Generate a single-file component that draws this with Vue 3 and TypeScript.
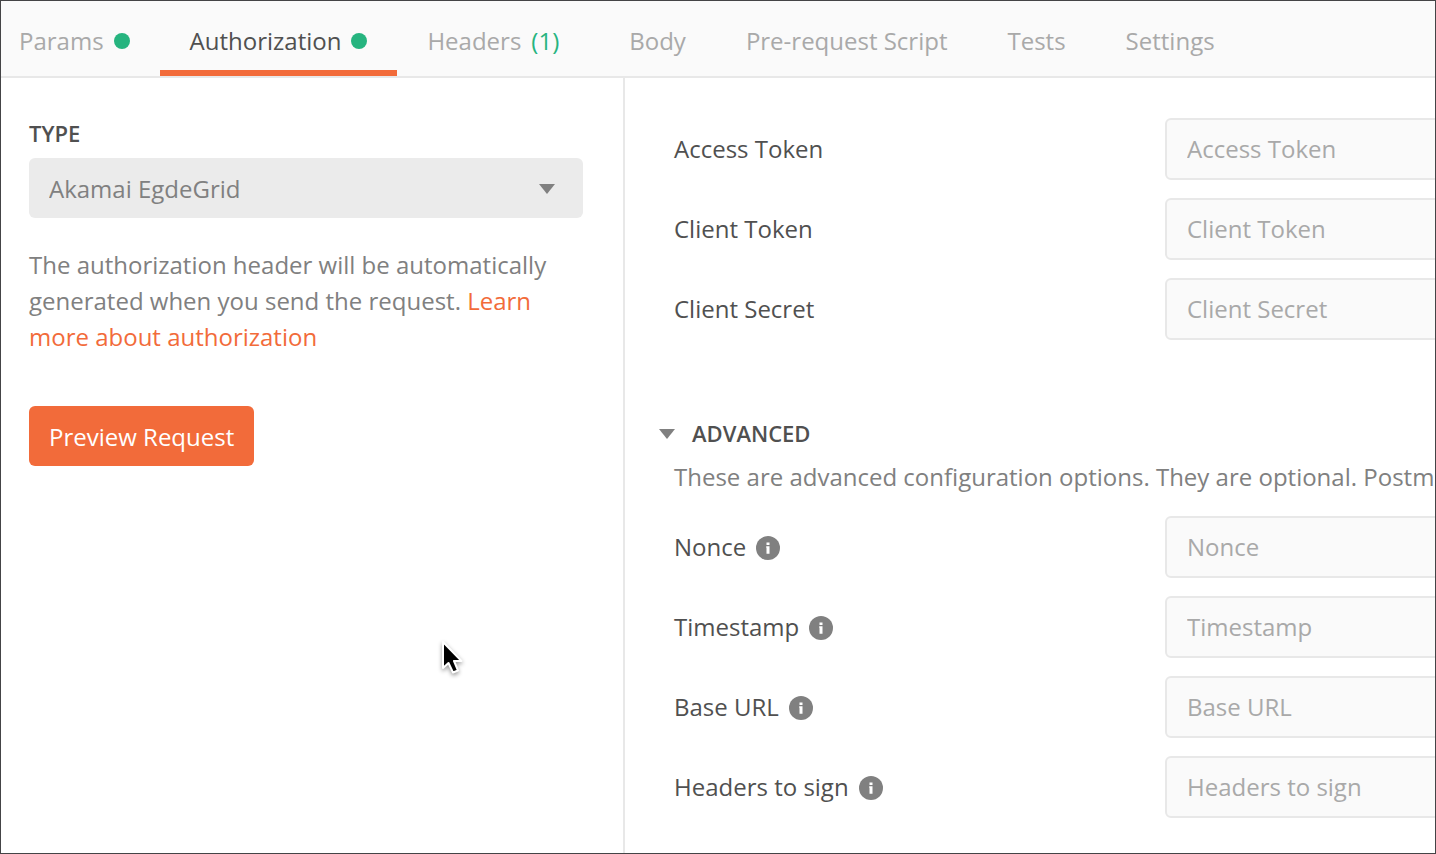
<script setup lang="ts">
import { ref } from 'vue'

interface Tab {
  name: string
  dot?: boolean
  count?: number
}

interface Field {
  id: string
  label: string
  info?: boolean
}

const tabs: Tab[] = [
  { name: 'Params', dot: true },
  { name: 'Authorization', dot: true },
  { name: 'Headers', count: 1 },
  { name: 'Body' },
  { name: 'Pre-request Script' },
  { name: 'Tests' },
  { name: 'Settings' },
]
const activeTab = ref('Authorization')

const tokenFields: Field[] = [
  { id: 'access-token', label: 'Access Token' },
  { id: 'client-token', label: 'Client Token' },
  { id: 'client-secret', label: 'Client Secret' },
]

const advancedFields: Field[] = [
  { id: 'nonce', label: 'Nonce', info: true },
  { id: 'timestamp', label: 'Timestamp', info: true },
  { id: 'base-url', label: 'Base URL', info: true },
  { id: 'headers-to-sign', label: 'Headers to sign', info: true },
]

const authType = ref('Akamai EgdeGrid')
const advancedOpen = ref(true)
const values = ref<Record<string, string>>({})
</script>

<template>
  <div class="window">
    <nav class="tabs">
      <button
        v-for="tab in tabs"
        :key="tab.name"
        type="button"
        class="tab"
        :class="{ active: tab.name === activeTab }"
        @click="activeTab = tab.name"
      >
        <span>{{ tab.name }}</span>
        <span v-if="tab.dot" class="dot"></span>
        <span v-if="tab.count" class="count">({{ tab.count }})</span>
      </button>
    </nav>

    <main class="panes">
      <section class="type-pane">
        <label class="heading" for="auth-type">TYPE</label>
        <div class="select-wrap">
          <select id="auth-type" v-model="authType" class="select">
            <option>Akamai EgdeGrid</option>
          </select>
          <svg class="select-arrow" width="16" height="10" viewBox="0 0 16 10">
            <path d="M0 0H16L8 10Z" fill="#808080" />
          </svg>
        </div>
        <p class="hint">
          The authorization header will be automatically generated when you send the request.
          <a href="#">Learn more about authorization</a>
        </p>
        <button type="button" class="preview">Preview Request</button>
      </section>

      <form class="fields-pane" @submit.prevent>
        <div class="fields">
          <div v-for="field in tokenFields" :key="field.id" class="row">
            <label :for="field.id">{{ field.label }}</label>
            <input :id="field.id" v-model="values[field.id]" type="text" :placeholder="field.label" />
          </div>
        </div>

        <button
          type="button"
          class="advanced-toggle"
          :aria-expanded="advancedOpen"
          @click="advancedOpen = !advancedOpen"
        >
          <svg class="toggle-arrow" width="16" height="10" viewBox="0 0 16 10">
            <path d="M0 0H16L8 10Z" fill="#808080" />
          </svg>
          <span class="heading">ADVANCED</span>
        </button>

        <template v-if="advancedOpen">
          <p class="advanced-text">
            These are advanced configuration options. They are optional. Postm
          </p>
          <div class="fields">
            <div v-for="field in advancedFields" :key="field.id" class="row">
              <label :for="field.id">
                {{ field.label }}
                <svg v-if="field.info" class="info" width="24" height="24" viewBox="0 0 24 24">
                  <circle cx="12" cy="12" r="12" fill="#808080" />
                  <path d="M10.5 6.5H13.5V9H10.5ZM10.2 10.3H13.5V17.8H10.5V11.8H10.2Z" fill="#fff" />
                </svg>
              </label>
              <input :id="field.id" v-model="values[field.id]" type="text" :placeholder="field.label" />
            </div>
          </div>
        </template>
      </form>
    </main>

    <svg class="pointer" width="32" height="40" viewBox="0 0 32 40">
      <path
        d="M4 3V29L9.5 24L14 33.5L19 31.5L15 22H22.5Z"
        fill="#000"
        stroke="#fff"
        stroke-width="2"
        stroke-linejoin="round"
      />
    </svg>
  </div>
</template>

<style>
body {
  margin: 0;
}
</style>

<style scoped>
.window {
  position: relative;
  box-sizing: border-box;
  display: flex;
  flex-direction: column;
  min-height: 100vh;
  overflow: hidden;
  border: 1px solid #444446;
  background: #fff;
  color: #505050;
  font-family: 'Open Sans', 'Noto Sans', sans-serif;
  font-size: 24px;
  line-height: 36px;
}

button,
input,
select {
  box-sizing: border-box;
  margin: 0;
  border: 0;
  font: inherit;
}

button {
  cursor: pointer;
}

.tabs {
  display: flex;
  padding-right: 30px;
  border-bottom: 2px solid #e8e8e8;
  background: #fafafa;
}

.tab {
  display: flex;
  align-items: center;
  gap: 10px;
  padding: 14px 30px 9px;
  border-top: 6px solid transparent;
  border-bottom: 6px solid transparent;
  background: none;
  color: #a9a9a9;
  line-height: 40px;
  white-space: nowrap;
}

.tab:first-child {
  padding-left: 18px;
}

.tab.active {
  border-bottom-color: #f26b3a;
  color: #505050;
}

.dot {
  width: 16px;
  height: 16px;
  border-radius: 50%;
  background: #26b47f;
}

.count {
  margin-right: 10px;
  color: #26b47f;
}

.panes {
  display: grid;
  flex: 1;
  grid-template-columns: minmax(0, 312fr) minmax(0, 405fr);
}

.type-pane {
  padding: 40px 40px 40px 28px;
  border-right: 2px solid #e8e8e8;
}

.heading {
  display: block;
  color: #505050;
  font-size: 22px;
  font-weight: 600;
  line-height: 30px;
}

.select-wrap {
  position: relative;
  margin-top: 10px;
}

.select {
  display: block;
  width: 100%;
  height: 60px;
  padding: 2px 60px 0 20px;
  border-radius: 6px;
  appearance: none;
  background: #ebebeb;
  color: #808080;
}

.select-arrow {
  position: absolute;
  top: 26px;
  right: 28px;
  pointer-events: none;
}

.hint {
  margin: 29px 0 51px;
  color: #808080;
}

.hint a {
  color: #f26b3a;
  text-decoration: none;
}

.preview {
  height: 60px;
  padding: 2px 20px 0;
  border-radius: 6px;
  background: #f26b3a;
  color: #fff;
}

.fields-pane {
  padding: 40px 0 30px 49px;
  overflow: hidden;
}

.fields {
  display: grid;
  gap: 18px;
}

.row {
  display: grid;
  grid-template-columns: 491px minmax(480px, 1fr);
  align-items: center;
}

.row label {
  display: flex;
  align-items: center;
  gap: 10px;
}

.info {
  margin-top: 2px;
}

.row input {
  height: 62px;
  padding: 0 20px 2px;
  border: 2px solid #e8e8e8;
  border-radius: 6px;
  background: #fafafa;
  color: #505050;
}

.row input::placeholder {
  color: #a9a9a9;
  opacity: 1;
}

.advanced-toggle {
  display: flex;
  align-items: center;
  gap: 17px;
  margin: 78px 0 0 -15px;
  padding: 0;
  background: none;
}

.toggle-arrow {
  margin-top: 2px;
}

.advanced-text {
  margin: 11px 0 21px;
  color: #808080;
  white-space: nowrap;
}

.pointer {
  position: absolute;
  top: 638px;
  left: 438px;
  filter: drop-shadow(0 2px 2px rgba(0, 0, 0, 0.4));
  pointer-events: none;
}
</style>
